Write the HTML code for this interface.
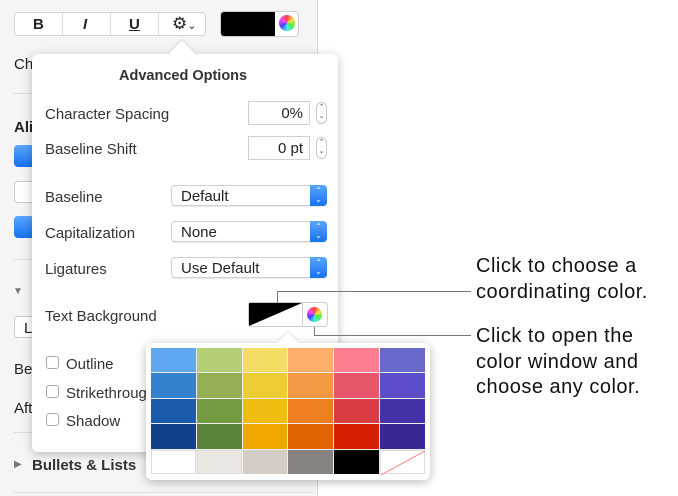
<!DOCTYPE html><html><head><style>
*{margin:0;padding:0;box-sizing:border-box}
body{width:678px;height:496px;position:relative;overflow:hidden;background:#fff;font-family:"Liberation Sans",sans-serif;color:#222}
.a{position:absolute}
.side{left:0;top:0;width:318px;height:496px;background:#f5f5f5;border-right:1px solid #d8d8d8}
.t{font-size:15px;white-space:nowrap}
.pop{left:32px;top:54px;width:306px;height:398px;background:#fff;border-radius:6px;box-shadow:0 2px 10px rgba(0,0,0,.25)}
.fld{background:#fff;border:1px solid #cfcfcf;font-size:15px;text-align:right;padding-right:6px;line-height:23px}
.step{width:11px;height:22px;border:1px solid #c8c8c8;border-radius:6px;background:#fff;font-size:7px;line-height:9px;text-align:center;color:#555}
.sel{width:156px;height:21px;border:1px solid #d0d0d0;border-radius:4px;background:#fff;font-size:15px;line-height:21px;padding-left:9px;box-shadow:0 1px 1px rgba(0,0,0,.1)}
.sel i{position:absolute;right:-1px;top:-1px;width:17px;height:21px;background:linear-gradient(#5aa6ff,#1672f0);border-radius:0 4px 4px 0;color:#fff;font-style:normal;font-size:8px;line-height:9px;text-align:center;padding-top:1px}
.cb{width:13px;height:13px;border:1px solid #aaa;border-radius:3px;background:#fff}
.wheel{border-radius:50%;background:conic-gradient(#f44,#fd4,#4e4,#4ee,#44f,#f4f,#f44)}
.call{font-size:20px;letter-spacing:0.5px;left:476px;color:#111;line-height:25.5px;white-space:nowrap}
</style></head><body>
<div class="a side"></div>
<div class="a" style="left:14px;top:12px;width:192px;height:24px;background:#fff;border:1px solid #d4d4d4;border-radius:4px"></div>
<div class="a" style="left:62px;top:13px;width:1px;height:22px;background:#ddd"></div>
<div class="a" style="left:110px;top:13px;width:1px;height:22px;background:#ddd"></div>
<div class="a" style="left:158px;top:13px;width:1px;height:22px;background:#ddd"></div>
<div class="a t" style="left:33px;top:16px;font-weight:bold">B</div>
<div class="a t" style="left:83px;top:16px;font-weight:bold;font-style:italic">I</div>
<div class="a t" style="left:129px;top:16px;font-weight:bold;text-decoration:underline">U</div>
<div class="a t" style="left:172px;top:14px;font-size:17px">⚙<span style="font-size:11px">⌄</span></div>
<div class="a" style="left:220px;top:11px;width:79px;height:26px;border:1px solid #ccc;border-radius:4px;background:#fff"></div>
<div class="a" style="left:221px;top:12px;width:54px;height:24px;background:#000;border-radius:3px 0 0 3px"></div>
<div class="a wheel" style="left:279px;top:15px;width:16px;height:16px"></div>
<div class="a t" style="left:14px;top:56px">Ch</div>
<div class="a" style="left:14px;top:93px;width:300px;height:1px;background:#ddd"></div>
<div class="a t" style="left:14px;top:119px;font-weight:bold">Ali</div>
<div class="a" style="left:14px;top:145px;width:30px;height:22px;background:linear-gradient(#5aa6ff,#1672f0);border-radius:4px"></div>
<div class="a" style="left:14px;top:181px;width:30px;height:22px;background:#fff;border:1px solid #ccc;border-radius:4px"></div>
<div class="a" style="left:14px;top:216px;width:30px;height:22px;background:linear-gradient(#5aa6ff,#1672f0);border-radius:4px"></div>
<div class="a" style="left:14px;top:259px;width:300px;height:1px;background:#ddd"></div>
<div class="a" style="left:13px;top:286px;font-size:10px;color:#777">▼</div>
<div class="a" style="left:14px;top:316px;width:30px;height:22px;background:#fff;border:1px solid #ccc;border-radius:4px"></div>
<div class="a t" style="left:24px;top:320px">L</div>
<div class="a t" style="left:14px;top:361px">Be</div>
<div class="a t" style="left:14px;top:400px">Aft</div>
<div class="a" style="left:14px;top:432px;width:300px;height:1px;background:#ddd"></div>
<div class="a" style="left:14px;top:459px;font-size:10px;color:#777">▶</div>
<div class="a t" style="left:32px;top:457px;font-weight:bold;color:#333">Bullets &amp; Lists</div>
<div class="a" style="left:14px;top:492px;width:300px;height:1px;background:#ddd"></div>
<div class="a pop"></div>
<div class="a" style="left:173px;top:44px;width:18px;height:18px;background:#fff;transform:rotate(45deg);box-shadow:-1px -1px 2px rgba(0,0,0,.12)"></div>
<div class="a t" style="left:119px;top:68px;font-weight:bold;color:#333;font-size:14.5px">Advanced Options</div>
<div class="a t" style="left:45px;top:106px;color:#333">Character Spacing</div>
<div class="a fld" style="left:248px;top:101px;width:62px;height:24px">0%</div>
<div class="a step" style="left:316px;top:102px">⌃<br>⌄</div>
<div class="a t" style="left:45px;top:141px;color:#333">Baseline Shift</div>
<div class="a fld" style="left:248px;top:136px;width:62px;height:24px">0 pt</div>
<div class="a step" style="left:316px;top:137px">⌃<br>⌄</div>
<div class="a t" style="left:45px;top:189px;color:#333">Baseline</div>
<div class="a sel" style="left:171px;top:185px">Default<i>⌃<br>⌄</i></div>
<div class="a t" style="left:45px;top:225px;color:#333">Capitalization</div>
<div class="a sel" style="left:171px;top:221px">None<i>⌃<br>⌄</i></div>
<div class="a t" style="left:45px;top:261px;color:#333">Ligatures</div>
<div class="a sel" style="left:171px;top:257px">Use Default<i>⌃<br>⌄</i></div>
<div class="a t" style="left:45px;top:308px;color:#333">Text Background</div>
<div class="a" style="left:248px;top:302px;width:80px;height:25px;border:1px solid #ccc;border-radius:4px;background:#fff"></div>
<svg class="a" style="left:249px;top:303px" width="53" height="23"><polygon points="0,0 53,0 0,23" fill="#000"/></svg>
<div class="a" style="left:302px;top:303px;width:1px;height:23px;background:#ccc"></div>
<div class="a wheel" style="left:307px;top:307px;width:15px;height:15px"></div>
<div class="a cb" style="left:46px;top:356px"></div>
<div class="a t" style="left:66px;top:356px;color:#333">Outline</div>
<div class="a cb" style="left:46px;top:385px"></div>
<div class="a t" style="left:66px;top:385px;color:#333">Strikethrough</div>
<div class="a cb" style="left:46px;top:413px"></div>
<div class="a t" style="left:66px;top:413px;color:#333">Shadow</div>
<div class="a" style="left:277px;top:291px;width:1px;height:12px;background:#777"></div>
<div class="a" style="left:277px;top:291px;width:194px;height:1px;background:#777"></div>
<div class="a" style="left:314px;top:327px;width:1px;height:9px;background:#777"></div>
<div class="a" style="left:314px;top:335px;width:157px;height:1px;background:#777"></div>
<div class="a" style="left:146px;top:343px;width:284px;height:137px;background:#fff;border-radius:6px;box-shadow:0 2px 10px rgba(0,0,0,.28)"></div>
<div class="a" style="left:281px;top:335px;width:14px;height:14px;background:#fff;transform:rotate(45deg);box-shadow:-1px -1px 2px rgba(0,0,0,.12)"></div>
<div class="a" style="left:151px;top:348px;width:274px;height:126px;display:grid;grid-template-columns:repeat(6,1fr);grid-template-rows:repeat(5,1fr);gap:1px;background:#eee">
<div style="background:#5fa8f0"></div><div style="background:#b3cf75"></div><div style="background:#f5dd65"></div><div style="background:#fdae6a"></div><div style="background:#fc7f91"></div><div style="background:#6869c8"></div>
<div style="background:#3481cf"></div><div style="background:#93b055"></div><div style="background:#edcd33"></div><div style="background:#f39944"></div><div style="background:#e7566b"></div><div style="background:#5b4ec8"></div>
<div style="background:#1a5cab"></div><div style="background:#769c43"></div><div style="background:#efbc12"></div><div style="background:#ee7f20"></div><div style="background:#da3c44"></div><div style="background:#4333a8"></div>
<div style="background:#114088"></div><div style="background:#5a8238"></div><div style="background:#efa600"></div><div style="background:#e06500"></div><div style="background:#d51f00"></div><div style="background:#372893"></div>
<div style="background:#fff;border:1px solid #ddd"></div><div style="background:#ebe8e4;border:1px solid #ddd"></div><div style="background:#d3cdc6"></div><div style="background:#878380"></div><div style="background:#000"></div><div style="background:#fff;border:1px solid #ddd;position:relative"><svg width="44" height="24" style="position:absolute;left:0;top:0"><line x1="0" y1="24" x2="44" y2="0" stroke="#f88" stroke-width="1"/></svg></div>
</div>
<div class="a call" style="top:254px">Click to choose a<br>coordinating color.</div>
<div class="a call" style="top:324px">Click to open the<br>color window and<br>choose any color.</div>
</body></html>
